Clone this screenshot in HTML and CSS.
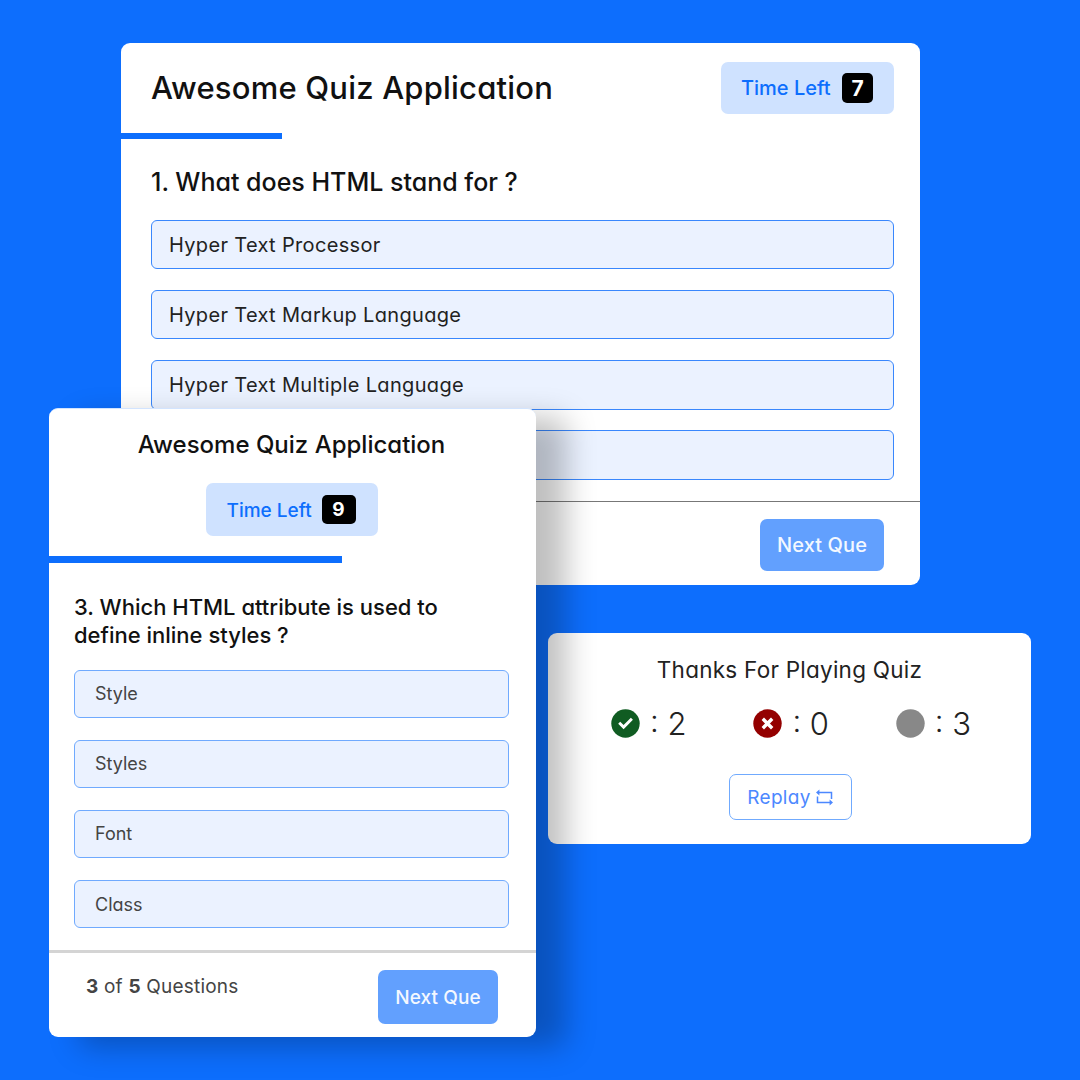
FILE: index.html
```html
<!DOCTYPE html>
<html lang="en">
<head>
<meta charset="utf-8">
<title>Awesome Quiz Application</title>
<link rel="stylesheet" href="styles.css">
</head>
<body>
<main class="stage">
  <section class="card quiz quiz-wide">
    <header class="quiz-header">
      <h1 class="quiz-title">Awesome Quiz Application</h1>
      <div class="timer"><span class="timer-label">Time Left</span><b class="timer-count">7</b></div>
    </header>
    <div class="progress"></div>
    <div class="quiz-body">
      <h2 class="question">1. What does HTML stand for ?</h2>
      <ul class="options">
        <li class="option">Hyper Text Processor</li>
        <li class="option">Hyper Text Markup Language</li>
        <li class="option">Hyper Text Multiple Language</li>
        <li class="option"></li>
      </ul>
    </div>
    <footer class="quiz-footer">
      <button class="next">Next Que</button>
    </footer>
  </section>

  <section class="card result">
    <h2 class="result-title">Thanks For Playing Quiz</h2>
    <div class="scores">
      <div class="score">
        <svg class="score-icon" viewBox="0 0 29 29"><circle cx="14.5" cy="14.5" r="14.2" fill="#105c22"/><path d="M8.2 13.8l4.4 4.3 8.3-8.3" fill="none" stroke="#fff" stroke-width="2.9"/></svg>
        <span>: 2</span>
      </div>
      <div class="score">
        <svg class="score-icon" viewBox="0 0 29 29"><circle cx="14.5" cy="14.5" r="14.2" fill="#940000"/><path d="M9.8 9.8l9.4 9.4M19.2 9.8l-9.4 9.4" fill="none" stroke="#fff" stroke-width="3.4"/></svg>
        <span>: 0</span>
      </div>
      <div class="score">
        <svg class="score-icon" viewBox="0 0 29 29"><circle cx="14.5" cy="14.5" r="14.2" fill="#888"/></svg>
        <span>: 3</span>
      </div>
    </div>
    <button class="replay">Replay
      <svg class="replay-icon" viewBox="0 0 17 17"><path d="M2.5 3.5H15.5V10M14.5 13.5H1.5V7.5" fill="none" stroke="currentColor" stroke-width="1.5"/><path d="M0 3.5L3.4 .5V6.5ZM17 13.5L13.6 10.5V16.5Z" fill="currentColor"/></svg>
    </button>
  </section>

  <section class="card quiz quiz-narrow">
    <header class="quiz-header">
      <h1 class="quiz-title">Awesome Quiz Application</h1>
      <div class="timer"><span class="timer-label">Time Left</span><b class="timer-count">9</b></div>
    </header>
    <div class="progress"></div>
    <div class="quiz-body">
      <h2 class="question">3. Which HTML attribute is used to<br>define inline styles ?</h2>
      <ul class="options">
        <li class="option">Style</li>
        <li class="option">Styles</li>
        <li class="option">Font</li>
        <li class="option">Class</li>
      </ul>
    </div>
    <footer class="quiz-footer">
      <p class="count"><b>3</b> of <b>5</b> Questions</p>
      <button class="next">Next Que</button>
    </footer>
  </section>
</main>
</body>
</html>
```
FILE: styles.css
```css
* { box-sizing: border-box; margin: 0; padding: 0; }
body { background: #0d6efd; font-family: Inter, "Open Sans", sans-serif; font-feature-settings: "cv11"; color: #111; }
.stage { position: relative; width: 1080px; height: 1080px; overflow: hidden; }
.card { position: absolute; background: #fff; border-radius: 9px; overflow: hidden; white-space: nowrap; }
.quiz { display: flex; flex-direction: column; }
.quiz-wide { left: 121px; top: 43px; width: 799px; height: 542px; }
.result { left: 548px; top: 633px; width: 483px; height: 211px; }
.quiz-narrow { left: 49px; top: 408px; width: 487px; height: 629px; border-top: 1px solid #d2e4ff; box-shadow: 30px 10px 30px rgba(0, 0, 0, .25); }

.quiz-header { display: flex; align-items: center; justify-content: space-between; }
.quiz-title { font-weight: 500; }
.timer { display: flex; align-items: center; background: #cfe2ff; border-radius: 7px; color: #0d6efd; font-weight: 500; }
.timer-count { display: flex; align-items: center; justify-content: center; background: #000; color: #fff; border-radius: 5px; }
.progress { background: #0d6efd; flex: none; }
.question { font-weight: 500; }
.options { list-style: none; display: flex; flex-direction: column; }
.option { display: flex; align-items: center; background: #ebf2ff; border: 1px solid #3987fd; border-radius: 6px; color: #222; }
.quiz-footer { display: flex; flex: 1; justify-content: flex-end; align-items: flex-start; }
.next { border: 0; background: #62a0fe; color: #f4f8ff; border-radius: 7px; font: inherit; font-weight: 500; }

.quiz-wide .quiz-header { height: 90px; padding: 0 26px 0 30px; }
.quiz-wide .quiz-title { font-size: 31px; line-height: 38px; letter-spacing: .2px; }
.quiz-wide .timer { width: 173px; height: 52px; padding-left: 20px; gap: 11px; font-size: 20px; }
.quiz-wide .timer-label { width: 90px; }
.quiz-wide .timer-count { width: 31px; height: 30px; font-size: 21px; }
.quiz-wide .progress { width: 161px; height: 6px; }
.quiz-wide .quiz-body { height: 362px; padding: 26px 26px 0 30px; }
.quiz-wide .question { font-size: 25px; line-height: 34px; margin-bottom: 20.5px; }
.quiz-wide .options { gap: 20.8px; }
.quiz-wide .option { height: 49.5px; padding: 1px 0 0 17px; font-size: 20px; letter-spacing: .33px; }
.quiz-wide .quiz-footer { border-top: 1px solid #777; padding: 17px 36px 0 0; }
.quiz-wide .next { width: 124px; height: 52px; font-size: 20px; letter-spacing: .1px; }

.quiz-narrow .quiz-header { flex-direction: column; justify-content: flex-start; height: 147px; padding: 20px 2px 0 0; gap: 22px; }
.quiz-narrow .quiz-title { font-size: 24px; line-height: 32px; }
.quiz-narrow .timer { width: 172px; height: 53px; padding-left: 21px; gap: 10px; font-size: 19px; }
.quiz-narrow .timer-label { width: 85px; padding-top: 1px; }
.quiz-narrow .timer-count { width: 34px; height: 29px; }
.quiz-narrow .progress { width: 293px; height: 7px; }
.quiz-narrow .quiz-body { height: 387px; padding: 30px 27px 0 25px; }
.quiz-narrow .question { font-size: 22px; line-height: 28px; margin-bottom: 21px; }
.quiz-narrow .options { gap: 22.5px; }
.quiz-narrow .option { height: 47.6px; padding-left: 20px; font-size: 18px; color: #444; border-color: #70aafe; }
.quiz-narrow .quiz-footer { border-top: 3px solid #d4d4d4; padding: 17px 38px 0 37px; justify-content: space-between; }
.quiz-narrow .count { font-size: 19px; line-height: 34px; letter-spacing: .2px; color: #444; }
.quiz-narrow .next { width: 120px; height: 54px; font-size: 19px; letter-spacing: .1px; }

.result { display: flex; flex-direction: column; align-items: center; padding-top: 20px; }
.result-title { font-size: 22.5px; line-height: 34px; font-weight: 400; letter-spacing: .25px; color: #222; }
.scores { display: flex; align-self: stretch; padding: 16px 0 0 63px; }
.score { display: flex; flex: none; align-items: center; width: 142.4px; height: 40px; gap: 10px; font-size: 31px; font-weight: 350; color: #222; }
.score-icon { width: 29px; height: 29px; }
.replay { display: flex; align-items: center; justify-content: center; gap: 5px; width: 123px; height: 46px; margin: 31px 0 0 1px; border: 1.5px solid #70aafe; border-radius: 7px; background: #fff; color: #4c88ff; font: inherit; font-size: 19px; letter-spacing: .3px; }
.replay-icon { width: 17px; height: 17px; }
```
